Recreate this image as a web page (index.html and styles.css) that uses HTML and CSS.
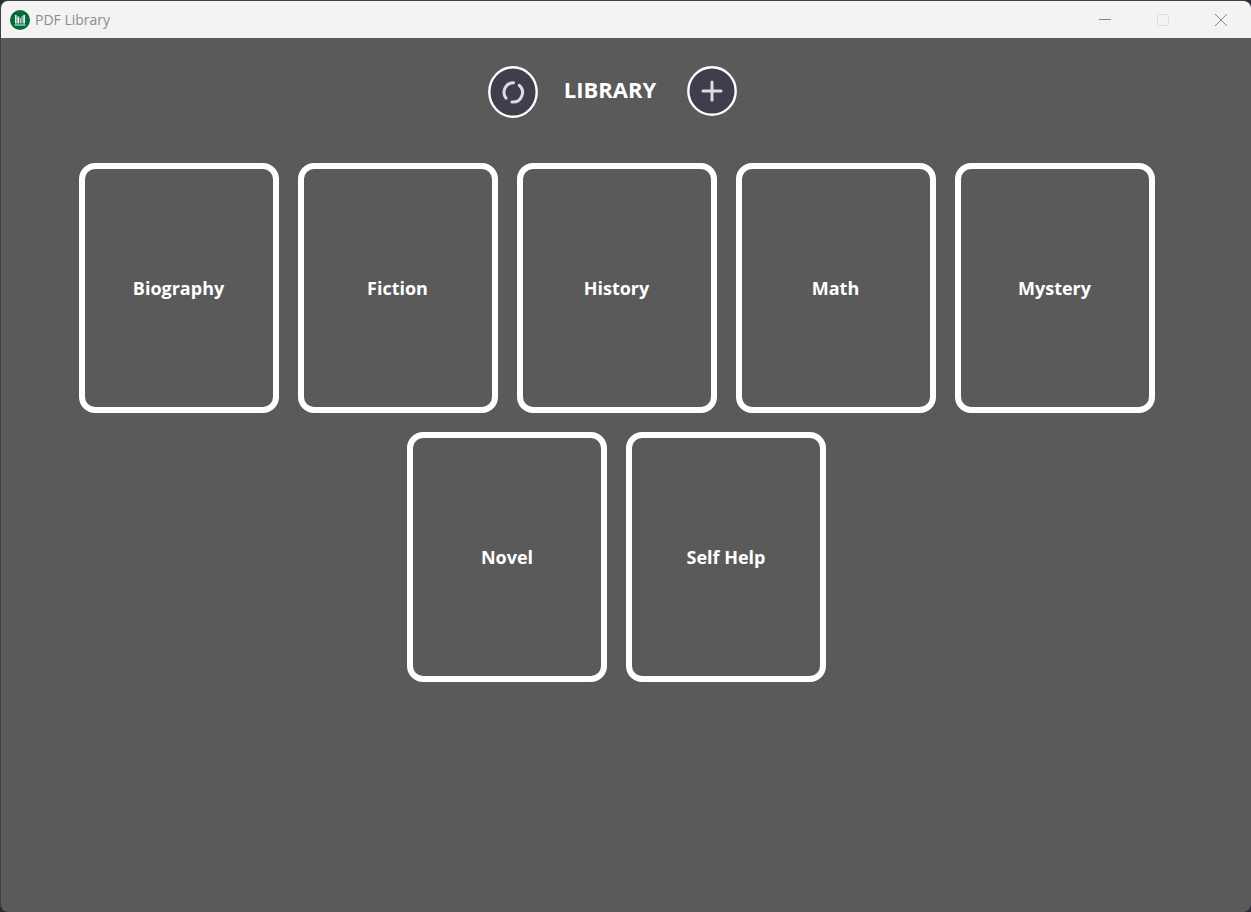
FILE: index.html
```html
<!DOCTYPE html>
<html lang="en">
<head>
<meta charset="utf-8">
<meta name="viewport" content="width=device-width, initial-scale=1">
<title>PDF Library</title>
<link rel="stylesheet" href="styles.css">
</head>
<body>
<div class="window">
  <header class="titlebar">
    <svg class="app-icon" viewBox="0 0 20 20" aria-hidden="true">
      <circle cx="10" cy="10" r="10" fill="#04693b"/>
      <g fill="#e6f3ec">
        <path d="M5 5h1.600v8.600H5zM7.300 6.500h1.800v7.100H7.300zM9.800 8h1v5.600h-1zM11.600 6h.9v7.600h-.9zM13.200 5h1.800v8.600h-1.800zM4.500 14.600h11v1h-11z"/>
      </g>
    </svg>
    <span class="app-name">PDF Library</span>
    <div class="window-controls">
      <button class="control" type="button" aria-label="Minimize"><svg viewBox="0 0 12 12"><path d="M0 5.500h12"/></svg></button>
      <button class="control control-off" type="button" aria-label="Maximize" disabled><svg viewBox="0 0 12 12"><rect x=".5" y=".5" width="11" height="11" rx="1"/></svg></button>
      <button class="control" type="button" aria-label="Close"><svg viewBox="0 0 12 12"><path d="M0 0l12 12M12 0L0 12"/></svg></button>
    </div>
  </header>
  <main class="content">
    <div class="toolbar">
      <button class="round" type="button" aria-label="Refresh">
        <svg class="refresh" viewBox="0 0 50 52"><ellipse class="disc" cx="25" cy="26" rx="23.700" ry="24.700"/><path class="mark" d="M18 32.200A9.600 9.600 0 0 1 25.500 16.800M31.300 19.300A9.600 9.600 0 0 1 24 36"/></svg>
      </button>
      <h1 class="heading">LIBRARY</h1>
      <button class="round" type="button" aria-label="Add">
        <svg class="add" viewBox="0 0 50 50"><circle class="disc" cx="25" cy="25" r="23.700"/><path class="mark" d="M16 25h18M25 16v18"/></svg>
      </button>
    </div>
    <nav class="shelf" aria-label="Categories">
      <button class="card" type="button">Biography</button>
      <button class="card" type="button">Fiction</button>
      <button class="card" type="button">History</button>
      <button class="card" type="button">Math</button>
      <button class="card" type="button">Mystery</button>
      <button class="card" type="button">Novel</button>
      <button class="card" type="button">Self Help</button>
    </nav>
  </main>
</div>
</body>
</html>
```
FILE: styles.css
```css
* { box-sizing: border-box; }

body {
  margin: 0;
  background: #2b2c33;
  font-family: "Open Sans", "Noto Sans", sans-serif;
}

button {
  padding: 0;
  border: 0;
  background: none;
  color: inherit;
  font: inherit;
}

.window {
  display: flex;
  flex-direction: column;
  min-height: 100vh;
  border: solid #3f3f41;
  border-width: 1px 0 0 1px;
  border-radius: 8px;
  background: #5a5a5a;
  overflow: hidden;
}

.titlebar {
  display: flex;
  align-items: center;
  height: 37px;
  padding: 0 1px 0 9px;
  background: #f3f3f3;
}

.app-icon { width: 20px; height: 20px; }

.app-name {
  margin-left: 5px;
  color: #8c8c8c;
  font-size: 14px;
}

.window-controls { display: flex; margin-left: auto; }

.control {
  display: grid;
  place-items: center;
  width: 58px;
  height: 36px;
}

.control svg {
  width: 12px;
  height: 12px;
  fill: none;
  stroke: #858585;
  overflow: visible;
}

.control-off svg { stroke: #dedede; }

.content { padding: 28px 19px 0 0; }

.toolbar {
  display: flex;
  justify-content: center;
  gap: 26px;
  padding-right: 8px;
  height: 97px;
}

.round { align-self: flex-start; }
.round svg { display: block; }
.refresh { width: 50px; height: 52px; }
.add { width: 50px; height: 50px; }
.disc { fill: #403e4d; stroke: #fff; stroke-width: 2.400; }
.mark { fill: none; stroke: #dcdce0; stroke-width: 3; stroke-linecap: round; }

.heading {
  margin: 0;
  padding-right: 5px;
  color: #fff;
  font-size: 22px;
  font-weight: 700;
  line-height: 46px;
}

.shelf {
  display: flex;
  flex-wrap: wrap;
  justify-content: center;
  gap: 19px;
  padding: 0 60px;
}

.card {
  width: 200px;
  height: 250px;
  border: 6px solid #fff;
  border-radius: 16px;
  color: #fff;
  font-size: 18px;
  font-weight: 700;
}
```
